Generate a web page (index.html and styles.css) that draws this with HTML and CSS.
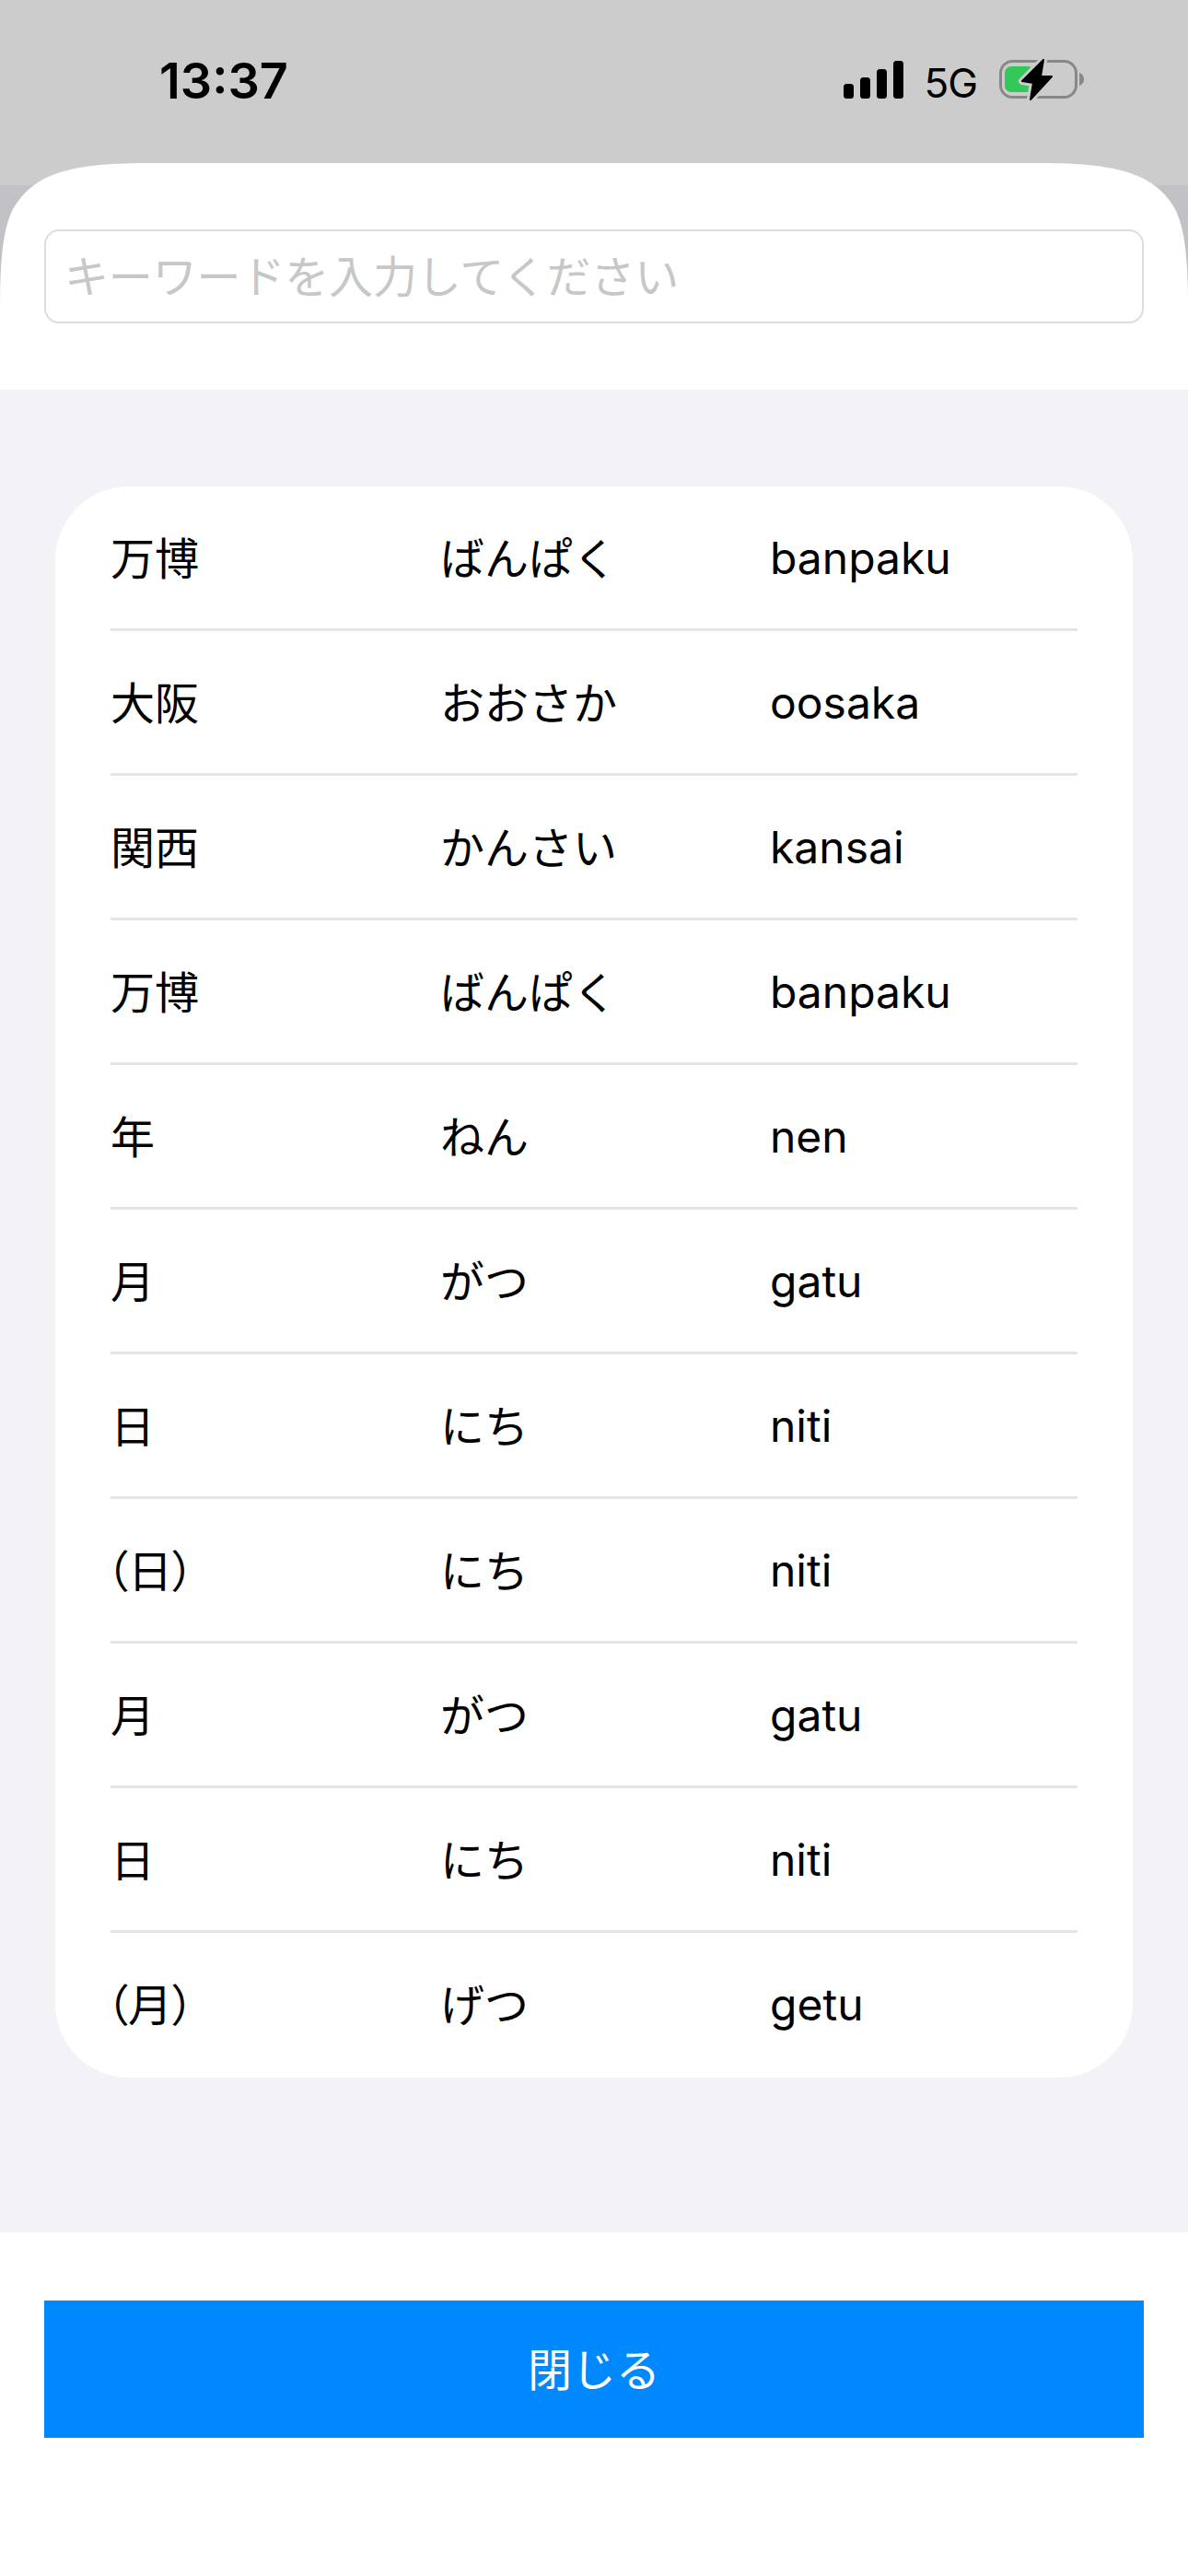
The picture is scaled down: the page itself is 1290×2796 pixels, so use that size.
FILE: index.html
```html
<!DOCTYPE html>
<html lang="ja">
<head>
<meta charset="utf-8">
<title>キーワード検索</title>
<link rel="stylesheet" href="styles.css">
</head>
<body>
<div class="screen">
  <header class="status">
    <span class="time">13:37</span>
    <div class="indicators">
      <svg class="signal" width="65" height="41" viewBox="0 0 65 41">
        <rect x="0" y="25" width="11" height="16" rx="3.5"/>
        <rect x="18" y="18" width="11" height="23" rx="3.5"/>
        <rect x="36" y="9" width="11" height="32" rx="3.5"/>
        <rect x="54" y="0" width="11" height="41" rx="3.5"/>
      </svg>
      <span class="network">5G</span>
      <svg class="battery" width="92" height="46" viewBox="0 0 92 46">
        <rect x="1.500" y="2.500" width="82" height="39" rx="13" fill="none" stroke="#888" stroke-width="3"/>
        <path d="M87 15c3 1 5 3.500 5 7s-2 6-5 7z" fill="#888"/>
        <rect x="6" y="8" width="32" height="28" rx="7" fill="#34c85a"/>
        <path d="M48 1 25 24l12 2-3 18 23-25H45z" fill="#ccc" stroke="#ccc" stroke-width="8" stroke-linejoin="round"/>
        <path d="M48 1 25 24l12 2-3 18 23-25H45z" fill="#000" stroke="#000" stroke-width="2" stroke-linejoin="round"/>
      </svg>
    </div>
  </header>
  <main class="sheet">
    <div class="search">
      <input class="search-input" type="text" placeholder="キーワードを入力してください">
    </div>
    <section class="content">
      <ul class="word-list">
        <li class="word"><span class="jp">万博</span><span class="jp">ばんぱく</span><span>banpaku</span></li>
        <li class="word"><span class="jp">大阪</span><span class="jp">おおさか</span><span>oosaka</span></li>
        <li class="word"><span class="jp">関西</span><span class="jp">かんさい</span><span>kansai</span></li>
        <li class="word"><span class="jp">万博</span><span class="jp">ばんぱく</span><span>banpaku</span></li>
        <li class="word"><span class="jp">年</span><span class="jp">ねん</span><span>nen</span></li>
        <li class="word"><span class="jp">月</span><span class="jp">がつ</span><span>gatu</span></li>
        <li class="word"><span class="jp">日</span><span class="jp">にち</span><span>niti</span></li>
        <li class="word"><span class="jp paren">（日）</span><span class="jp">にち</span><span>niti</span></li>
        <li class="word"><span class="jp">月</span><span class="jp">がつ</span><span>gatu</span></li>
        <li class="word"><span class="jp">日</span><span class="jp">にち</span><span>niti</span></li>
        <li class="word"><span class="jp paren">（月）</span><span class="jp">げつ</span><span>getu</span></li>
      </ul>
    </section>
    <footer class="actions">
      <button class="close" type="button">閉じる</button>
    </footer>
  </main>
</div>
</body>
</html>
```
FILE: styles.css
```css
* { box-sizing: border-box; }
html, body { margin: 0; padding: 0; }
body {
  font-family: Inter, "Noto Sans CJK JP", sans-serif;
  color: #000;
}
.screen {
  width: 1290px;
  height: 2796px;
  display: flex;
  flex-direction: column;
  overflow: hidden;
  background: linear-gradient(#ccc 0 201px, #c2c2c6 201px);
}
.status {
  height: 177px;
  flex: none;
  display: flex;
  justify-content: space-between;
  align-items: flex-start;
  padding: 56px 113px 0 173px;
}
.time {
  font-size: 54px;
  line-height: 64px;
  font-weight: 600;
}
.indicators {
  display: flex;
  align-items: flex-start;
  padding-top: 8px;
}
.signal { margin-top: 2px; }
.network {
  font-size: 44px;
  line-height: 44px;
  margin: 4px 24px 0 22px;
  letter-spacing: -1px;
}
.sheet {
  flex: 1;
  display: flex;
  flex-direction: column;
  background: #fff;
  clip-path: path("M0 156C0 100 4 70 14 50 35 14 70 0 160 0H1130C1220 0 1255 14 1276 50 1286 70 1290 100 1290 156V2619H0Z");
}
.search {
  height: 246px;
  flex: none;
  padding: 72px 48px 0;
}
.search-input {
  display: block;
  width: 100%;
  height: 102px;
  padding: 0 20px;
  border: 2px solid #dcdcdc;
  border-radius: 16px;
  background: #fff;
  font: inherit;
  font-size: 48px;
  letter-spacing: -0.15px;
  outline: none;
}
.search-input::placeholder { color: #c7c7c7; opacity: 1; }
.content {
  flex: 1;
  background: #f2f2f7;
  padding: 105px 60px 0;
}
.word-list {
  list-style: none;
  margin: 0;
  padding: 0 60px;
  background: #fff;
  border-radius: 80px;
}
.word {
  display: grid;
  grid-template-columns: 358px 358px 1fr;
  align-items: center;
  height: 157px;
  border-bottom: 3px solid #e5e5e5;
  font-size: 48px;
}
.word:last-child { border-bottom-color: transparent; }
.jp { padding-bottom: 4px; }
.paren { font-feature-settings: "palt"; margin-left: -5px; }
.actions {
  height: 373px;
  flex: none;
  padding: 74px 48px 0;
}
.close {
  display: block;
  width: 100%;
  height: 149px;
  padding: 0 0 6px;
  border: 0;
  background: #0088ff;
  color: #fff;
  font: inherit;
  font-size: 48px;
}
```
